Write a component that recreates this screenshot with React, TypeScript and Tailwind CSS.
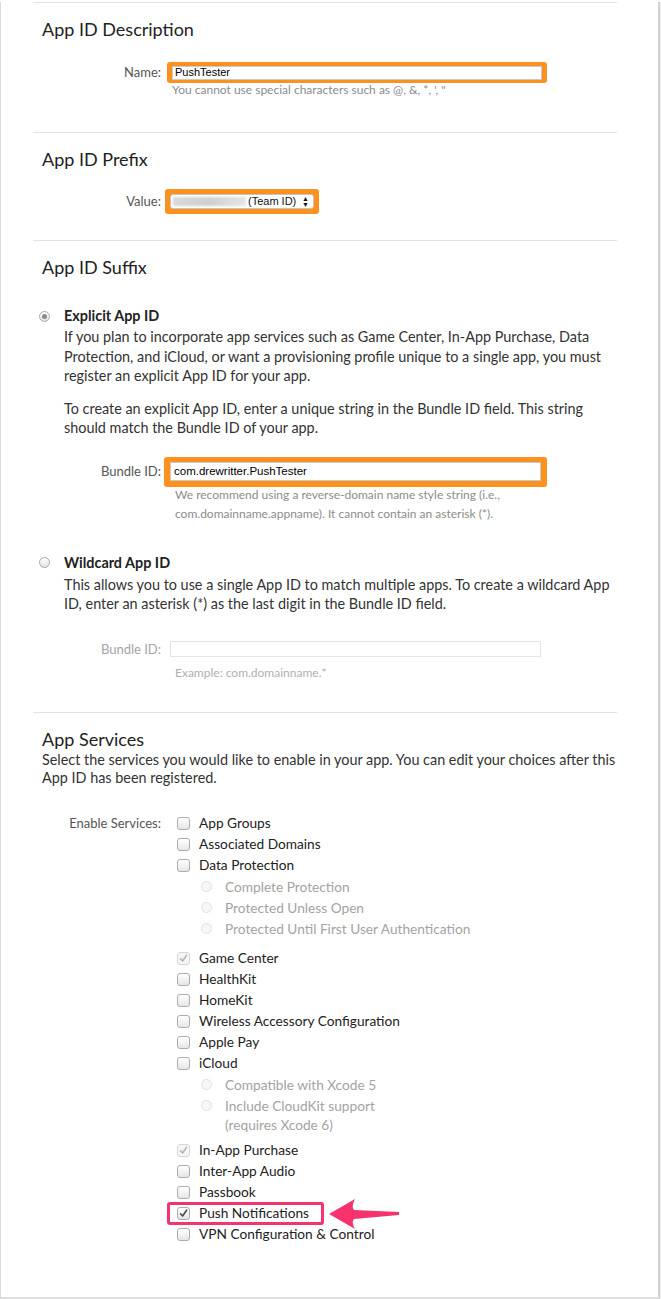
import React from 'react';

const font = { fontFamily: 'Lato, "Open Sans", sans-serif' };
const arial = { fontFamily: '"Liberation Sans", Arial, sans-serif' };

const Check = ({ state }: { state: 'off' | 'on' | 'dim' }) => (
  <span
    className={`inline-flex items-center justify-center w-[13px] h-[13px] rounded-[3px] border shrink-0 ${
      state === 'dim' ? 'border-[#d6d6d6] bg-[#f6f6f6]' : 'border-[#acacac] bg-gradient-to-b from-white to-[#e6e6e6]'
    }`}
  >
    {state !== 'off' && (
      <svg width="9" height="9" viewBox="0 0 9 9">
        <path
          d="M1.5 4.8 L3.6 7 L7.6 1.2"
          fill="none"
          stroke={state === 'on' ? '#4a4a4a' : '#b4b4b4'}
          strokeWidth="1.6"
          strokeLinecap="round"
          strokeLinejoin="round"
        />
      </svg>
    )}
  </span>
);

const Radio = ({ selected, dim }: { selected?: boolean; dim?: boolean }) => (
  <span
    className={`inline-flex items-center justify-center w-[11px] h-[11px] rounded-full border shrink-0 ${
      dim ? 'border-[#e2e2e2] bg-[#f7f7f7]' : 'border-[#a9a9a9] bg-gradient-to-b from-white to-[#e4e4e4]'
    }`}
  >
    {selected && <span className="w-[5px] h-[5px] rounded-full bg-[#8a8a8a]" />}
  </span>
);

const Label = ({ children, className = '' }: { children: React.ReactNode; className?: string }) => (
  <div className={`w-[128px] shrink-0 text-right text-[13px] text-[#555] ${className}`}>{children}</div>
);

type Item = { label: string; state: 'off' | 'on' | 'dim'; subs?: string[][]; highlight?: boolean };

const services: Item[] = [
  { label: 'App Groups', state: 'off' },
  { label: 'Associated Domains', state: 'off' },
  {
    label: 'Data Protection',
    state: 'off',
    subs: [['Complete Protection'], ['Protected Unless Open'], ['Protected Until First User Authentication']],
  },
  { label: 'Game Center', state: 'dim' },
  { label: 'HealthKit', state: 'off' },
  { label: 'HomeKit', state: 'off' },
  { label: 'Wireless Accessory Configuration', state: 'off' },
  { label: 'Apple Pay', state: 'off' },
  {
    label: 'iCloud',
    state: 'off',
    subs: [['Compatible with Xcode 5'], ['Include CloudKit support', '(requires Xcode 6)']],
  },
  { label: 'In-App Purchase', state: 'dim' },
  { label: 'Inter-App Audio', state: 'off' },
  { label: 'Passbook', state: 'off' },
  { label: 'Push Notifications', state: 'on', highlight: true },
  { label: 'VPN Configuration & Control', state: 'off' },
];

const ServiceRow = ({ item }: { item: Item }) => (
  <div>
    <div className="relative flex items-center h-[21px]">
      <Check state={item.state} />
      <span className="ml-[9px] text-[13.7px] text-[#222]">{item.label}</span>
      {item.highlight && (
        <>
          <div className="absolute left-[-10px] top-[-1px] w-[157px] h-[23px] border-[3px] border-[#f7336e] rounded-[3px]" />
          <svg className="absolute left-[151px] top-[-7px]" width="72" height="35" viewBox="0 0 72 35">
            <path
              d="M1 18 L27 3 Q23 11 26 14 L71 16 L71 19 L26 23 Q23 26 27 33 Z"
              fill="#f7336e"
            />
          </svg>
        </>
      )}
    </div>
    {item.subs && (
      <div className={item.label === 'iCloud' ? 'pb-[5px]' : 'pb-[9px]'}>
        {item.subs.map((lines) => (
          <div key={lines[0]} className="flex items-start pl-[24px] pt-[1px]">
            <span className="flex items-center h-[19px] py-[1px]">
              <Radio dim />
            </span>
            <div className="ml-[13px] text-[13.7px] leading-[19px] text-[#a3a3a3] pb-[1px]">
              {lines.map((l) => (
                <div key={l}>{l}</div>
              ))}
            </div>
          </div>
        ))}
      </div>
    )}
  </div>
);

const Heading = ({ children }: { children: React.ReactNode }) => (
  <h2 className="pl-[9px] text-[18px] leading-[24px] text-[#222]">{children}</h2>
);

export default function App() {
  return (
    <div className="w-[661px] h-[1299px] bg-[#efefef]" style={font}>
      <div className="w-[660px] h-[1297px] bg-white border-l border-l-[#dadada] border-r-2 border-r-[#d2d2d2] border-b-2 border-b-[#dedede] pl-[32px]">
        <div className="w-[584px]">
          {/* description */}
          <section className="mt-[2px] border-t border-[#e3e3e3] pt-[14px] pb-[35px]">
            <Heading>App ID Description</Heading>
            <div className="flex items-center mt-[21px]">
              <Label>Name:</Label>
              <div className="ml-[6px] w-[380px] h-[21px] rounded-[3px] bg-[#fb921f] flex items-center px-[5px]">
                <div className="w-full h-[14px] bg-white border border-[#c9c9c9] flex items-center px-[2px] text-[11px] text-black" style={arial}>
                  PushTester
                </div>
              </div>
            </div>
            <p className="ml-[139px] text-[12px] leading-[14px] text-[#8c8c8c]">You cannot use special characters such as @, &amp;, *, ', "</p>
          </section>

          {/* prefix */}
          <section className="border-t border-[#e3e3e3] pt-[14px] pb-[26px]">
            <Heading>App ID Prefix</Heading>
            <div className="flex items-center mt-[18px]">
              <Label>Value:</Label>
              <div className="ml-[4px] w-[154px] h-[25px] rounded-[3px] bg-[#fb921f] flex items-center px-[5px]">
                <div className="w-full h-[15px] bg-white border border-[#c4c4c4] rounded-[3px] flex items-center pl-[2px] pr-[4px] text-[11px] text-[#111]" style={arial}>
                  <span className="w-[73px] h-[9px] bg-gradient-to-r from-[#d9d9d9] via-[#cfcfcf] to-[#e6e6e6] blur-[1px]" />
                  <span className="ml-[2px]">(Team ID)</span>
                  <span className="ml-auto text-[7px] leading-[6px] flex flex-col items-center">
                    <span>▲</span>
                    <span>▼</span>
                  </span>
                </div>
              </div>
            </div>
          </section>

          {/* suffix */}
          <section className="border-t border-[#e3e3e3] pt-[14px] pb-[30px]">
            <Heading>App ID Suffix</Heading>
            <div className="mt-[27px] flex items-center h-[20px] pl-[6px]">
              <Radio selected />
              <span className="ml-[14px] text-[14.4px] font-bold text-[#222]">Explicit App ID</span>
            </div>
            <div className="pl-[31px] mr-[3px] text-[14.4px] leading-[19.5px] text-[#333]">
              <p className="mt-[1px]">
                If you plan to incorporate app services such as Game Center, In-App Purchase, Data Protection, and iCloud, or want a provisioning profile unique to a single app, you must register an explicit App ID for your app.
              </p>
              <p className="mt-[13px]">
                To create an explicit App ID, enter a unique string in the Bundle ID field. This string should match the Bundle ID of your app.
              </p>
            </div>
            <div className="flex items-center mt-[19px]">
              <Label className="text-[13.5px]">Bundle ID:</Label>
              <div className="ml-[3px] w-[383px] h-[30px] rounded-[3px] bg-[#fb921f] flex items-center px-[6px]">
                <div className="w-full h-[19px] bg-white border border-[#c9c9c9] flex items-center px-[3px] text-[11.5px] text-black" style={arial}>
                  com.drewritter.PushTester
                </div>
              </div>
            </div>
            <p className="ml-[142px] mt-[-2px] w-[350px] text-[12px] leading-[19px] text-[#8c8c8c]">
              We recommend using a reverse-domain name style string (i.e., com.domainname.appname). It cannot contain an asterisk (*).
            </p>

            <div className="mt-[30px] flex items-center h-[20px] pl-[6px]">
              <Radio />
              <span className="ml-[14px] text-[14.4px] font-bold text-[#222]">Wildcard App ID</span>
            </div>
            <p className="mt-[2px] pl-[31px] mr-[3px] text-[14.4px] leading-[19.5px] text-[#333]">
              This allows you to use a single App ID to match multiple apps. To create a wildcard App ID, enter an asterisk (*) as the last digit in the Bundle ID field.
            </p>
            <div className="flex items-center mt-[26px]">
              <Label className="text-[13.5px] text-[#a5a5a5]">Bundle ID:</Label>
              <div className="ml-[9px] w-[371px] h-[16px] border border-[#e4e4e4]" />
            </div>
            <p className="ml-[142px] mt-[4px] text-[12px] leading-[19px] text-[#b0b0b0]">Example: com.domainname.*</p>
          </section>

          {/* services */}
          <section className="border-t border-[#e3e3e3] pt-[14px]">
            <Heading>App Services</Heading>
            <p className="pl-[9px] mr-[-12px] text-[14.4px] leading-[18px] text-[#333]">
              Select the services you would like to enable in your app. You can edit your choices after this App ID has been registered.
            </p>
            <div className="flex items-start mt-[26px]">
              <Label className="text-[13.6px] leading-[21px]">Enable Services:</Label>
              <div className="ml-[16px]">
                {services.map((s) => (
                  <ServiceRow key={s.label} item={s} />
                ))}
              </div>
            </div>
          </section>
        </div>
      </div>
    </div>
  );
}
